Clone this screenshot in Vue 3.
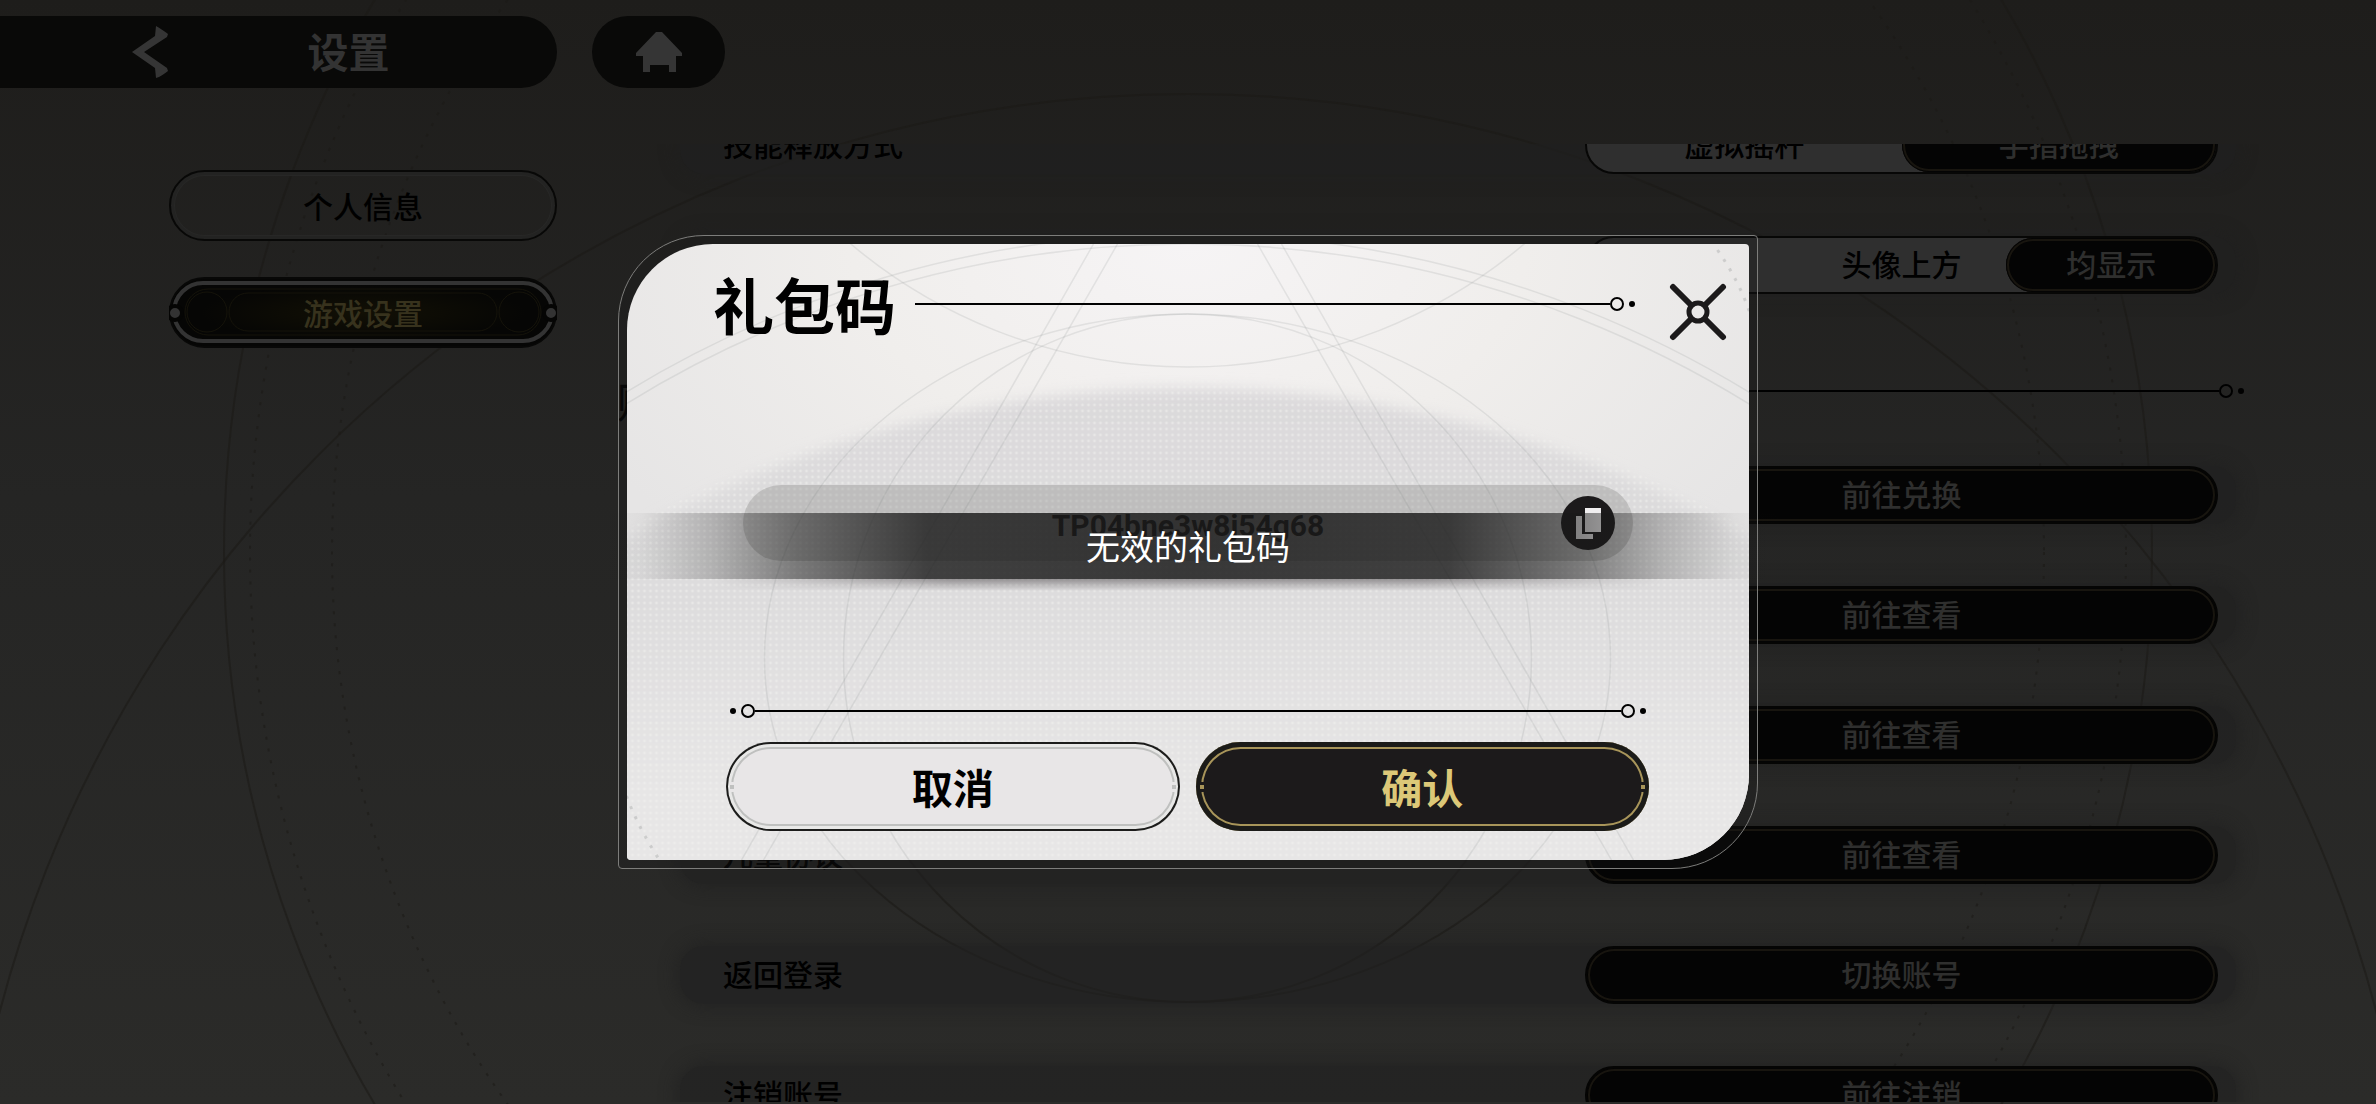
<script setup>
import { ref } from 'vue';

const tabs = ['个人信息', '游戏设置']
const activeTab = ref(1)

const choices = ref([
  { label: '技能释放方式', options: ['虚拟摇杆', '手指拖拽'], value: 1 },
  { label: '血条显示', options: ['关闭', '头像上方', '均显示'], value: 2 }
])

const links = [
  { label: '礼包码', action: '前往兑换' },
  { label: '用户协议', action: '前往查看' },
  { label: '隐私政策', action: '前往查看' },
  { label: '儿童协议', action: '前往查看' },
  { label: '返回登录', action: '切换账号' },
  { label: '注销账号', action: '前往注销' }
]

const code = ref('TP04bne3w8j54g68')
const message = ref('无效的礼包码')
</script>

<template>
<div class="page">
  <svg class="backdrop" viewBox="0 0 2376 1104" preserveAspectRatio="xMidYMid slice" aria-hidden="true">
    <g fill="none" stroke="#1b1a16" stroke-opacity="0.55" stroke-width="2">
      <circle cx="1188" cy="1322" r="1228" />
      <ellipse cx="1188" cy="552" rx="964" ry="1028" />
      <ellipse cx="1188" cy="552" rx="938" ry="1000" stroke-dasharray="3 9" />
      <ellipse cx="1188" cy="552" rx="856" ry="910" stroke-dasharray="3 9" />
      <ellipse cx="1188" cy="658" rx="423" ry="344" />
      <circle cx="1188" cy="658" r="344" />
    </g>
  </svg>

  <header class="header">
    <div class="header-bar">
      <button class="icon-button" aria-label="返回">
        <svg width="36" height="52" viewBox="0 0 36 52">
          <path d="M24 0C28 2 32 5 36 8L35 11L12 26L35 42L36 45C32 48 28 51 24 52L23 42L0 26L23 10Z" fill="#353535" />
        </svg>
      </button>
      <h1 class="header-title">设置</h1>
    </div>
    <button class="home" aria-label="主页">
      <svg width="46" height="40" viewBox="0 0 46 40">
        <path d="M20 0H26L46 21V24H40V40H33V33H14V40H7V24H0V21Z" fill="#353535" />
      </svg>
    </button>
  </header>

  <main class="main">
    <nav class="tabs">
      <button
        v-for="(tab, index) in tabs"
        :key="tab"
        class="tab"
        :class="{'tab-active' : activeTab === index}"
        @click="activeTab = index"
      >
        <svg v-if="activeTab === index" class="tab-ornament" viewBox="0 0 388 71" aria-hidden="true">
          <g fill="none" stroke="#15130a" stroke-width="1">
            <rect x="16" y="12" width="356" height="46" rx="23" />
            <rect x="60" y="16" width="268" height="38" rx="19" />
            <circle cx="38" cy="35" r="20" />
            <circle cx="350" cy="35" r="20" />
          </g>
          <rect x="5" y="6" width="378" height="58" rx="29" fill="none" stroke="#333" stroke-width="4" />
          <g fill="#333" stroke="#050504" stroke-width="4">
            <circle cx="6" cy="36" r="7" />
            <circle cx="382" cy="36" r="7" />
          </g>
        </svg>
        <span>{{ tab }}</span>
      </button>
    </nav>

    <section class="list">
      <div v-for="item in choices" :key="item.label" class="row">
        <span class="row-label">{{ item.label }}</span>
        <div class="segments" role="group" :aria-label="item.label">
          <button
            v-for="(option, index) in item.options"
            :key="option"
            class="segment"
            :class="{'segment-active' : item.value === index}"
            @click="item.value = index"
          >
            {{ option }}
          </button>
        </div>
      </div>

      <div class="section-head">
        <h2>账号</h2>
        <i class="rule"></i>
        <i class="ring"></i>
        <i class="dot"></i>
      </div>

      <div v-for="item in links" :key="item.label" class="row">
        <span class="row-label">{{ item.label }}</span>
        <button class="row-button">{{ item.action }}</button>
      </div>
    </section>
  </main>

  <div class="overlay">
    <div class="dialog-frame" role="dialog" aria-labelledby="dialog-title">
      <div class="dialog">
        <svg class="dialog-art" viewBox="627 244 1123 616" preserveAspectRatio="xMidYMid slice" aria-hidden="true">
          <defs>
            <linearGradient id="dome" x1="0" y1="388" x2="0" y2="800" gradientUnits="userSpaceOnUse">
              <stop offset="0" stop-color="#dbd9db" />
              <stop offset="0.5" stop-color="#dddcdd" />
              <stop offset="1" stop-color="#e7e6e6" />
            </linearGradient>
            <pattern id="dots" width="6" height="6" patternUnits="userSpaceOnUse">
              <circle cx="3" cy="3" r="1.4" fill="#f2f2ef" />
            </pattern>
            <filter id="soft" x="-5%" y="-5%" width="110%" height="110%">
              <feGaussianBlur stdDeviation="7" />
            </filter>
          </defs>
          <circle cx="1188" cy="1508" r="1120" fill="url(#dome)" filter="url(#soft)" />
          <circle cx="1188" cy="1508" r="1128" fill="url(#dots)" opacity="0.5" />
          <g fill="none" stroke="#8b908e" stroke-opacity="0.17" stroke-width="1.5">
            <circle cx="1188" cy="1308" r="1074" />
            <circle cx="1188" cy="1308" r="1064" />
            <circle cx="1188" cy="-155" r="522" />
            <ellipse cx="1188" cy="658" rx="423" ry="344" />
            <circle cx="1188" cy="658" r="344" />
            <path d="M1094 244L742 860M1118 244L764 860M1282 244L1634 860M1258 244L1612 860" />
            <path d="M1718 250Q1740 282 1750 312M627 796Q640 830 660 860" stroke-opacity="0.3" stroke-width="3" stroke-dasharray="3 8" />
          </g>
        </svg>

        <div class="dialog-head">
          <h2 id="dialog-title">礼包码</h2>
          <i class="rule rule-double"></i>
          <i class="ring"></i>
          <i class="dot"></i>
          <button class="close" aria-label="关闭">
            <svg width="58" height="58" viewBox="0 0 58 58" fill="none" stroke="#1c1a1b" stroke-width="6" stroke-linecap="round">
              <path d="M4 4L21 21M54 4L37 21M4 54L21 37M54 54L37 37" />
              <circle cx="29" cy="29" r="9" stroke-width="5" />
            </svg>
          </button>
        </div>

        <div class="code-box">
          <input v-model="code" class="code-input" type="text" aria-label="礼包码">
          <button class="copy" aria-label="粘贴">
            <svg width="54" height="54" viewBox="0 0 54 54">
              <path d="M15 20H21V38H32V43H15Z" fill="#f0eeef" />
              <path d="M24 12H40V36H24Z" fill="#f0eeef" />
            </svg>
          </button>
        </div>

        <div class="divider">
          <i class="dot"></i>
          <i class="ring"></i>
          <i class="rule"></i>
          <i class="ring"></i>
          <i class="dot"></i>
        </div>

        <div class="actions">
          <button class="action action-cancel">取消</button>
          <button class="action action-confirm">确认</button>
        </div>
      </div>
    </div>
    <div v-if="message" class="toast" role="status">{{ message }}</div>
  </div>
</div>
</template>

<style>
body {
  margin: 0;
  background: #242423;
}
</style>

<style scoped>
.page {
  position: relative;
  display: flex;
  flex-direction: column;
  height: 100vh;
  overflow: hidden;
  background: linear-gradient(#1e1d1b, #252524 45%, #2b2b29);
  font-family: "Noto Sans CJK SC", sans-serif;
  color: #000;
}
button {
  margin: 0;
  border: 0;
  padding: 0;
  background: none;
  color: inherit;
  font: inherit;
  cursor: pointer;
}
h1, h2 {
  margin: 0;
  white-space: nowrap;
}
svg {
  display: block;
}

.backdrop {
  position: absolute;
  inset: 0;
  width: 100%;
  height: 100%;
}

.header {
  position: relative;
  display: flex;
  gap: 35px;
  padding-top: 16px;
}
.header-bar {
  display: flex;
  align-items: center;
  box-sizing: border-box;
  width: 557px;
  height: 72px;
  padding: 0 28px 0 132px;
  border-radius: 0 36px 36px 0;
  background: #090908;
}
.header-title {
  flex: 1;
  padding-bottom: 4px;
  text-align: center;
  font-size: 41px;
  line-height: 68px;
  font-weight: 700;
  color: #333;
}
.home {
  display: flex;
  align-items: center;
  justify-content: center;
  width: 133px;
  height: 72px;
  border-radius: 36px;
  background: #090908;
}

.main {
  position: relative;
  display: flex;
  flex: 1;
  gap: 60px;
  min-height: 0;
  padding: 56px 112px 2px 169px;
}
.tabs {
  display: flex;
  flex-direction: column;
  gap: 36px;
  width: 388px;
  padding-top: 26px;
}
.tab {
  position: relative;
  box-sizing: border-box;
  height: 71px;
  border: 2px solid #080807;
  border-radius: 36px;
  font-size: 30px;
  line-height: 67px;
  font-weight: 500;
  box-shadow: inset 0 0 0 3px #232322, inset 0 0 0 4px #272726;
}
.tab span {
  position: relative;
}
.tab-active {
  background: radial-gradient(ellipse at center, #121005, #060605 60%);
  color: #37321d;
  box-shadow: none;
}
.tab-ornament {
  position: absolute;
  inset: -2px;
}

.list {
  flex: 1;
  min-width: 0;
  padding-right: 20px;
  overflow: hidden;
}
.row {
  display: flex;
  align-items: center;
  justify-content: space-between;
  height: 58px;
  margin: 0 8px 62px 63px;
  padding: 0 18px 0 43px;
  border-radius: 24px;
  background: rgba(31, 31, 31, 0.6);
  box-shadow: 0 0 16px 4px rgba(31, 31, 31, 0.6);
  font-size: 30px;
  line-height: 50px;
  font-weight: 500;
}
.row:first-child {
  margin-top: -28px;
}
.row-label {
  padding-bottom: 4px;
}
.segments {
  display: flex;
  box-sizing: border-box;
  width: 633px;
  height: 58px;
  border: 2px solid #070706;
  border-radius: 29px;
  background: #2f2f2f;
}
.segment {
  flex: 1;
  padding-bottom: 4px;
  border-radius: 27px;
}
.segment-active,
.row-button {
  background: #040404;
  color: #2f2f2e;
  box-shadow: inset 0 0 0 1px #040404, inset 0 0 0 3px #18150f;
}
.row-button {
  box-sizing: border-box;
  width: 633px;
  height: 58px;
  padding-bottom: 4px;
  border: 2px solid #050504;
  border-radius: 29px;
}

.section-head {
  display: flex;
  align-items: center;
  height: 58px;
  margin: 68px 0 46px;
}
.section-head h2 {
  margin-right: 20px;
  padding-top: 18px;
  font-size: 41px;
  line-height: 58px;
  font-weight: 500;
}

/* тонкая линия с кольцом и точкой на конце */
.rule {
  flex: 1;
  height: 2px;
  background: currentColor;
}
.rule-double {
  box-shadow: 0 7px 0 -1px #c9c7c6;
}
.ring {
  box-sizing: border-box;
  width: 14px;
  height: 14px;
  border: 2px solid currentColor;
  border-radius: 50%;
}
.dot {
  width: 6px;
  height: 6px;
  margin: 0 5px;
  border-radius: 50%;
  background: currentColor;
}
.section-head .dot {
  margin-right: 0;
}

.overlay {
  position: absolute;
  inset: 0;
  display: flex;
  align-items: center;
  justify-content: center;
}
.dialog-frame {
  box-sizing: border-box;
  width: 1140px;
  max-width: 96vw;
  padding: 8px;
  border: 1px solid #7d7d7b;
  border-radius: 86px 4px 86px 4px;
  background: rgba(28, 28, 27, 0.3);
}
.dialog {
  position: relative;
  display: flex;
  flex-direction: column;
  padding: 22px 0 29px;
  overflow: hidden;
  border-radius: 86px 4px 86px 4px;
  background: radial-gradient(ellipse 60% 70% at 50% 0, #f6f4f5, #f0eeec 50%, #e6e5e5);
}
.dialog-art {
  position: absolute;
  inset: 0;
  width: 100%;
  height: 100%;
}
.dialog-head {
  position: relative;
  display: flex;
  align-items: center;
  height: 76px;
  padding: 0 22px 0 86px;
}
.dialog-head h2 {
  margin-right: 19px;
  font-size: 61px;
  line-height: 76px;
  font-weight: 700;
}
.close {
  margin: 16px 0 0 29px;
}

.code-box {
  position: relative;
  display: flex;
  align-items: center;
  justify-content: flex-end;
  height: 76px;
  margin: 143px 116px 0;
  padding-right: 18px;
  border-radius: 38px;
  background: rgba(110, 110, 108, 0.27);
}
.code-input {
  flex: 1;
  min-width: 0;
  height: 76px;
  margin: 0;
  border: 0;
  padding: 4px 0 0 72px;
  background: none;
  color: #1d1b1b;
  font-family: "Roboto", sans-serif;
  font-size: 30px;
  font-weight: 700;
  text-align: center;
}
.copy {
  border-radius: 50%;
  background: #1c1a1b;
}

.divider {
  position: relative;
  display: flex;
  align-items: center;
  height: 14px;
  margin: 143px 98px 0;
}
.actions {
  position: relative;
  display: flex;
  gap: 16px;
  margin: 24px 100px 0 99px;
}
.action {
  position: relative;
  flex: 1;
  height: 89px;
  border-radius: 45px;
  font-size: 41px;
  line-height: 89px;
  font-weight: 700;
}
.action-cancel {
  background: #e8e6e7;
  box-shadow: inset 0 0 0 2px #1c1c1b, inset 0 0 0 5px #e8e8e7, inset 0 0 0 7px #bfc0bf;
}
.action-confirm {
  background: #1c1a1b;
  color: #dcc878;
  box-shadow: inset 0 0 0 5px #1b1b19, inset 0 0 0 7px #a8955a;
}
/* точки по бокам кнопок */
.action::before,
.action::after {
  content: "";
  position: absolute;
  top: 40px;
  left: 4px;
  width: 4px;
  height: 4px;
  border: 2px solid #e8e6e7;
  border-width: 3px 0;
  background: #bfc0bf;
}
.action::after {
  left: auto;
  right: 4px;
}
.action-confirm::before,
.action-confirm::after {
  border-color: #1c1a1b;
  background: #a8955a;
}

.toast {
  position: absolute;
  top: calc(50% - 39px);
  left: 25%;
  right: 25%;
  height: 66px;
  background: linear-gradient(90deg, rgba(24, 24, 24, 0), rgba(24, 24, 24, 0.04) 4%, rgba(24, 24, 24, 0.22) 10%, rgba(24, 24, 24, 0.5) 17%, rgba(24, 24, 24, 0.8) 28%, rgba(24, 24, 24, 0.84) 50%, rgba(24, 24, 24, 0.8) 72%, rgba(24, 24, 24, 0.5) 83%, rgba(24, 24, 24, 0.22) 90%, rgba(24, 24, 24, 0.04) 96%, rgba(24, 24, 24, 0));
  color: #fff;
  font-size: 34px;
  line-height: 66px;
  text-align: center;
}
/* мягкая тень под сообщением */
.toast::after {
  content: "";
  position: absolute;
  top: 66px;
  left: 10%;
  right: 10%;
  height: 12px;
  background: linear-gradient(rgba(60, 55, 58, 0.45), rgba(60, 55, 58, 0));
  mask-image: linear-gradient(90deg, transparent, #000 25%, #000 75%, transparent);
}
</style>
